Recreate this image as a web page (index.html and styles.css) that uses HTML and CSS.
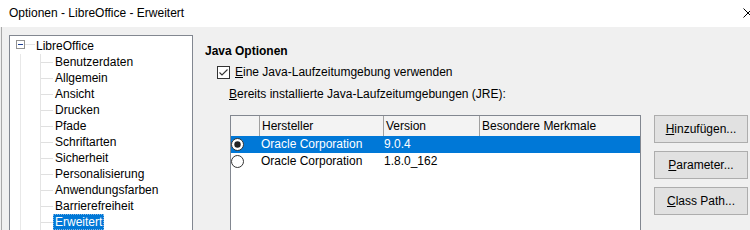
FILE: index.html
```html
<!DOCTYPE html>
<html lang="de">
<head>
<meta charset="utf-8">
<title>Optionen - LibreOffice - Erweitert</title>
<link rel="stylesheet" href="styles.css">
</head>
<body>
<div class="window">
  <div class="titlebar">
    <span class="title">Optionen - LibreOffice - Erweitert</span>
    <svg class="close" width="10" height="10" viewBox="0 0 10 10"><path d="M0.5 0.5 L9.5 9.5 M9.5 0.5 L0.5 9.5" stroke="#000" stroke-width="1" fill="none"/></svg>
  </div>
  <div class="content">
    <div class="tree">
      <div class="root-row">
        <svg class="expander" width="9" height="9" viewBox="0 0 9 9"><rect x="0.5" y="0.5" width="8" height="8" fill="#fff" stroke="#919191"/><path d="M2 4.5 H7" stroke="#1c3f94" stroke-width="1"/></svg>
        <span class="root-link"></span>
        <span class="node-label">LibreOffice</span>
      </div>
      <div class="children">
        <div class="sub">
          <div class="item"><span class="node-label">Benutzerdaten</span></div>
          <div class="item"><span class="node-label">Allgemein</span></div>
          <div class="item"><span class="node-label">Ansicht</span></div>
          <div class="item"><span class="node-label">Drucken</span></div>
          <div class="item"><span class="node-label">Pfade</span></div>
          <div class="item"><span class="node-label">Schriftarten</span></div>
          <div class="item"><span class="node-label">Sicherheit</span></div>
          <div class="item"><span class="node-label">Personalisierung</span></div>
          <div class="item"><span class="node-label">Anwendungsfarben</span></div>
          <div class="item"><span class="node-label">Barrierefreiheit</span></div>
          <div class="item"><span class="node-label selected">Erweitert</span></div>
        </div>
      </div>
    </div>
    <div class="panel">
      <div class="heading">Java Optionen</div>
      <div class="check-row">
        <svg class="checkbox" width="13" height="13" viewBox="0 0 13 13"><rect x="0.5" y="0.5" width="12" height="12" fill="#fff" stroke="#333"/><path d="M2.5 6.5 L5 9 L10.5 3.5" stroke="#333" stroke-width="1.1" fill="none"/></svg>
        <span><u>E</u>ine Java-Laufzeitumgebung verwenden</span>
      </div>
      <div class="list-label"><u>B</u>ereits installierte Java-Laufzeitumgebungen (JRE):</div>
      <div class="jre-row">
        <div class="list">
          <div class="list-header">
            <div class="hcell"></div>
            <div class="hcell">Hersteller</div>
            <div class="hcell">Version</div>
            <div class="hcell last">Besondere Merkmale</div>
          </div>
          <div class="list-row selected-row">
            <div class="cell radio-cell"><svg width="13" height="13" viewBox="0 0 13 13"><circle cx="6.5" cy="6.5" r="6" fill="#fff" stroke="#333"/><circle cx="6.5" cy="6.5" r="3.2" fill="#222"/></svg></div>
            <div class="cell">Oracle Corporation</div>
            <div class="cell ver">9.0.4</div>
            <div class="cell"></div>
          </div>
          <div class="list-row">
            <div class="cell radio-cell"><svg width="13" height="13" viewBox="0 0 13 13"><circle cx="6.5" cy="6.5" r="6" fill="#fff" stroke="#333"/></svg></div>
            <div class="cell">Oracle Corporation</div>
            <div class="cell ver">1.8.0_162</div>
            <div class="cell"></div>
          </div>
        </div>
        <div class="buttons">
          <button class="btn"><u>H</u>inzufügen...</button>
          <button class="btn"><u>P</u>arameter...</button>
          <button class="btn"><u>C</u>lass Path...</button>
        </div>
      </div>
    </div>
  </div>
</div>
</body>
</html>
```
FILE: styles.css
```css
html, body {
  margin: 0;
  padding: 0;
  background: #f0f0f0;
}
body {
  font-family: "Segoe UI", "Liberation Sans", Arial, sans-serif;
  font-size: 12px;
  color: #000;
}
.window {
  width: 750px;
  height: 230px;
  overflow: hidden;
}
.titlebar {
  height: 27px;
  background: #fff;
  display: flex;
  align-items: center;
  justify-content: space-between;
  padding-left: 9px;
  overflow: hidden;
}
.title {
  line-height: 16px;
  margin-top: -1px;
}
.close {
  margin-right: -3px;
  margin-top: -1px;
  flex: none;
}
.content {
  display: flex;
  align-items: flex-start;
  height: 203px;
  margin-left: 1px;
  border-left: 1px solid #a8a8a8;
  padding: 8px 0 0 7px;
  box-sizing: border-box;
}
.tree {
  width: 184px;
  height: 200px;
  flex: none;
  box-sizing: border-box;
  background: #fff;
  border: 1px solid #828790;
  padding: 2px 0 0 6px;
}
.root-row {
  display: flex;
  align-items: flex-start;
  height: 16px;
  line-height: 16px;
}
.expander {
  margin-top: 2px;
  flex: none;
}
.root-link {
  width: 10px;
  margin-top: 6px;
  border-top: 1px solid #e4e4e4;
  flex: none;
}
.root-row .node-label {
  margin-left: 1px;
  padding: 0;
}
.children {
  margin-left: 4px;
  border-left: 1px solid #e8e8e8;
}
.sub {
  margin-left: 19px;
  border-left: 1px solid #e4e4e4;
}
.item {
  display: flex;
  align-items: center;
  height: 16px;
  line-height: 16px;
}
.item::before {
  content: "";
  width: 12px;
  border-top: 1px solid #e0e0e0;
  flex: none;
}
.node-label {
  padding: 0 2px;
  white-space: nowrap;
}
.node-label.selected {
  background: #0078d7;
  color: #fff;
  outline: 1px dotted #7fb6e6;
  outline-offset: -1px;
}
.panel {
  margin-left: 12px;
  padding-top: 8px;
  flex: 1;
  min-width: 0;
}
.heading {
  font-weight: bold;
  line-height: 16px;
}
.check-row {
  margin-top: 5px;
  margin-left: 12px;
  display: flex;
  align-items: center;
  gap: 5px;
  line-height: 16px;
}
.checkbox {
  flex: none;
}
.list-label {
  margin-top: 6px;
  margin-left: 24px;
  line-height: 16px;
}
.jre-row {
  margin-top: 13px;
  margin-left: 25px;
  display: flex;
  align-items: flex-start;
  gap: 13px;
}
.list {
  width: 411px;
  height: 130px;
  box-sizing: border-box;
  background: #fff;
  border: 1px solid #828790;
  flex: none;
}
.list-header,
.list-row {
  display: grid;
  grid-template-columns: 29px 124px 96px 1fr;
}
.list-header {
  height: 20px;
  background: #f3f3f3;
}
.hcell {
  border-right: 1px solid #a0a0a0;
  padding-left: 2px;
  line-height: 20px;
  white-space: nowrap;
}
.hcell.last {
  border-right: none;
}
.list-row {
  height: 17px;
  line-height: 17px;
}
.selected-row {
  background: #0078d7;
  color: #fff;
}
.cell {
  padding-left: 1px;
  white-space: nowrap;
}
.cell.ver {
  padding-left: 0;
}
.radio-cell {
  padding-left: 0;
  display: flex;
  align-items: center;
}
.buttons {
  display: flex;
  flex-direction: column;
  gap: 8px;
}
.btn {
  width: 94px;
  height: 28px;
  box-sizing: border-box;
  background: #e1e1e1;
  border: 1px solid #adadad;
  font: inherit;
  color: #000;
  padding: 0;
  margin: 0;
}
```
